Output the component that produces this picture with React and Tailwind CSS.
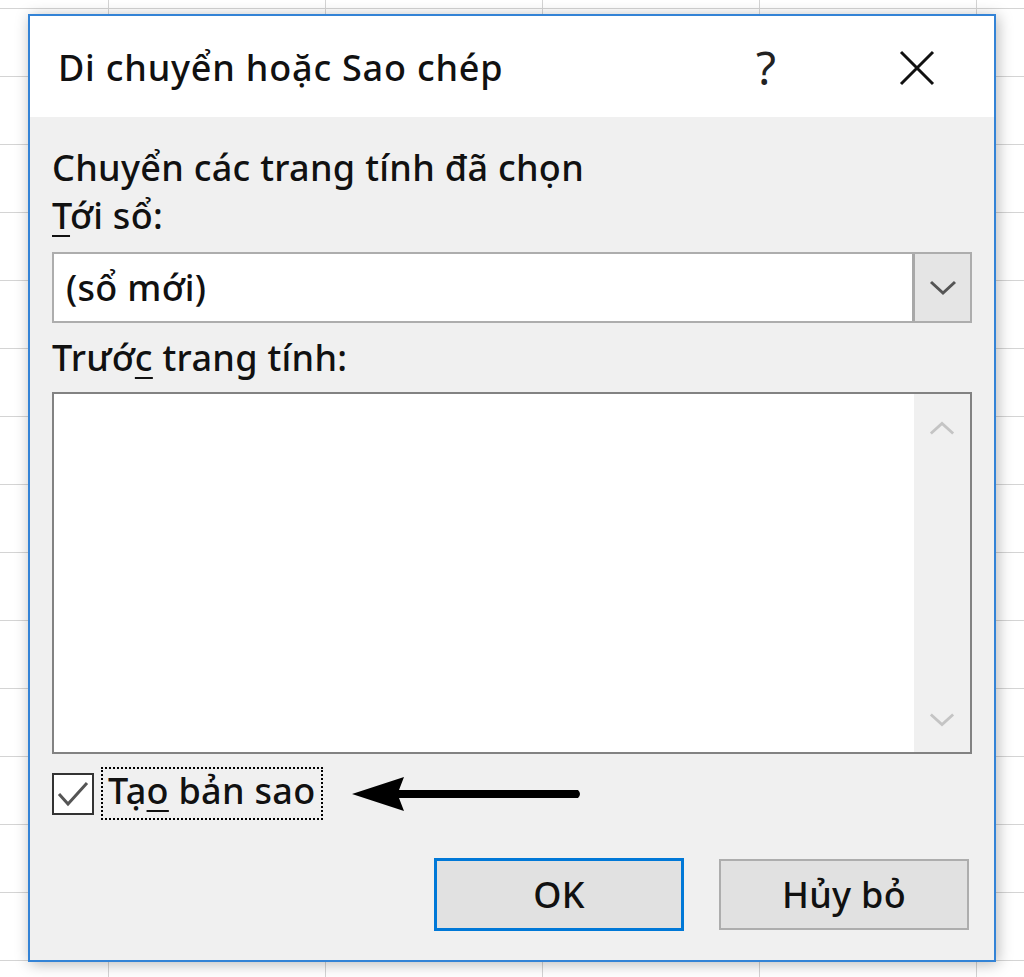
import React from "react";

const font = "font-['Noto_Sans','Liberation_Sans',sans-serif]";

const Chevron = ({ up, color, className }) => (
  <svg className={className} viewBox="0 0 28 16" fill="none">
    <polyline
      points={up ? "2,14 14,3 26,14" : "2,2 14,13 26,2"}
      stroke={color}
      strokeWidth="3"
      strokeLinejoin="miter"
    />
  </svg>
);

const Label = ({ before, mark, after }) => (
  <span>
    {before}
    <span className="underline underline-offset-[6px] decoration-2">{mark}</span>
    {after}
  </span>
);

export default function App() {
  return (
    <div
      className={`w-[1024px] h-[977px] overflow-hidden bg-white bg-[image:linear-gradient(to_right,#d4d4d4_1px,transparent_1px),linear-gradient(to_bottom,#d4d4d4_1px,transparent_1px)] bg-[size:217px_68px] bg-[position:108px_8px] pt-[14px] pl-[28px] ${font}`}
    >
      <div className="w-[968px] h-[948px] border-2 border-[#3383d6] bg-[#f0f0f0] shadow-[2px_2px_14px_rgba(0,0,0,0.28)] flex flex-col text-[#111]">
        {/* title bar */}
        <div className="h-[101px] bg-white flex items-center pt-[3px] pl-[28px] pr-[59px]">
          <div className="flex-1 text-[36px] leading-[48px] font-medium tracking-[0.8px]">Di chuyển hoặc Sao chép</div>
          <div className="w-[22px] text-[46px] leading-[48px] text-[#222] mb-[2px]">?</div>
          <svg className="ml-[121px] w-[36px] h-[36px]" viewBox="0 0 36 36">
            <path d="M2 2 L34 34 M34 2 L2 34" stroke="#111" strokeWidth="3" />
          </svg>
        </div>

        {/* body */}
        <div className="flex-1 flex flex-col px-[22px] pt-[27px] text-[36px] leading-[48px] font-medium tracking-[0.3px]">
          <div>Chuyển các trang tính đã chọn</div>
          <div>
            <Label mark="T" after="ới sổ:" />
          </div>

          <div className="mt-[12px] h-[71px] border-2 border-[#adadad] bg-white flex">
            <div className="flex-1 flex items-center pl-[12px]">(sổ mới)</div>
            <div className="w-[58px] border-l-[3px] border-[#a8a8a8] bg-[#e5e5e5] flex items-center justify-center">
              <Chevron color="#555" className="w-[28px] h-[16px]" />
            </div>
          </div>

          <div className="mt-[11px]">
            <Label before="Trướ" mark="c" after=" trang tính:" />
          </div>

          <div className="mt-[10px] h-[362px] border-2 border-[#828282] bg-white flex">
            <div className="flex-1" />
            <div className="w-[56px] bg-[#f0f0f0] flex flex-col items-center justify-between pt-[26px] pb-[24px]">
              <Chevron up color="#c4c4c4" className="w-[26px] h-[16px]" />
              <Chevron color="#c4c4c4" className="w-[26px] h-[16px]" />
            </div>
          </div>

          <div className="mt-[13px] flex items-center">
            <div className="w-[42px] h-[42px] border-2 border-[#333] bg-white flex items-center justify-center">
              <svg className="w-[34px] h-[30px]" viewBox="0 0 34 30" fill="none">
                <polyline points="3,15 12,25 31,4" stroke="#555" strokeWidth="3" />
              </svg>
            </div>
            <div className="ml-[7px] border-2 border-dotted border-black px-[5px] pb-[5px] leading-[44px]">
              <Label before="Tạ" mark="o" after=" bản sao" />
            </div>
            <svg className="ml-[29px] w-[230px] h-[38px]" viewBox="0 0 230 38">
              <path d="M0 19 L52 2 L47 15 L226 15 Q230 19 226 23 L47 23 L52 36 Z" fill="#000" />
            </svg>
          </div>

          <div className="mt-[38px] flex justify-end gap-[35px] pr-[3px]">
            <button className="w-[250px] h-[73px] border-[3px] border-[#0078d7] bg-[#e1e1e1] text-[36px]">
              OK
            </button>
            <button className="w-[250px] h-[71px] mt-[1px] border-2 border-[#adadad] bg-[#e1e1e1] text-[36px]">
              Hủy bỏ
            </button>
          </div>
        </div>
      </div>
    </div>
  );
}
